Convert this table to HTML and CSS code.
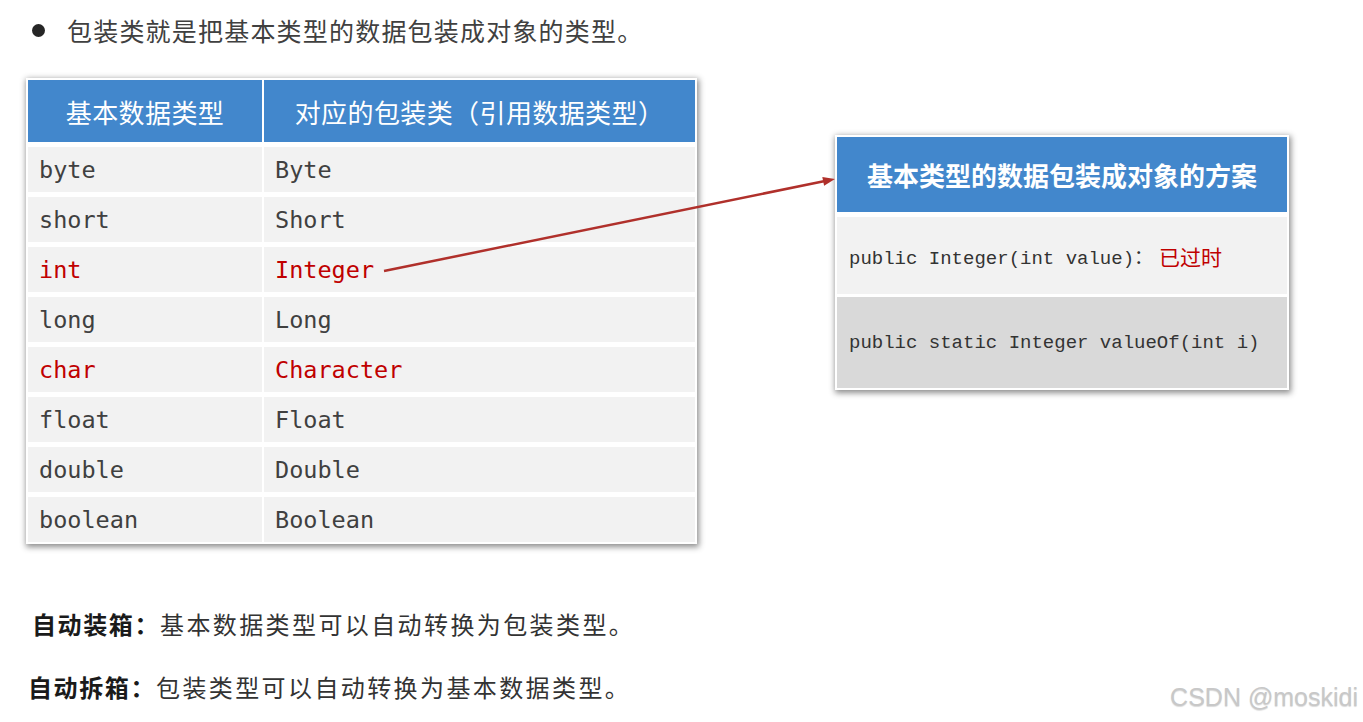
FILE: index.html
```html
<!DOCTYPE html>
<html lang="zh-CN">
<head>
  <meta charset="UTF-8">
  <title>包装类</title>
  <meta name="viewport" content="width=device-width, initial-scale=1.0">
  <link rel="stylesheet" href="styles.css">
</head>
<body>
  <div class="page">
    <p class="lead"><span class="dot"></span>包装类就是把基本类型的数据包装成对象的类型。</p>

    <div class="row">
      <div class="types">
        <div class="th">基本数据类型</div>
        <div class="th">对应的包装类（引用数据类型）</div>
        <div class="td">byte</div><div class="td">Byte</div>
        <div class="td">short</div><div class="td">Short</div>
        <div class="td red">int</div><div class="td red">Integer</div>
        <div class="td">long</div><div class="td">Long</div>
        <div class="td red">char</div><div class="td red">Character</div>
        <div class="td">float</div><div class="td">Float</div>
        <div class="td">double</div><div class="td">Double</div>
        <div class="td">boolean</div><div class="td">Boolean</div>
      </div>

      <div class="scheme">
        <div class="scheme-head">基本类型的数据包装成对象的方案</div>
        <div class="scheme-row first">public Integer(int value)：<span class="old">已过时</span></div>
        <div class="scheme-row second">public static Integer valueOf(int i)</div>
      </div>
    </div>

    <p class="note note-one"><b>自动装箱：</b><span>基本数据类型可以自动转换为包装类型。</span></p>
    <p class="note note-two"><b>自动拆箱：</b><span>包装类型可以自动转换为基本数据类型。</span></p>

    <!-- 箭头：Integer -> 方案 -->
    <svg class="arrow" width="1363" height="722" viewBox="0 0 1363 722">
      <line x1="384" y1="271" x2="825" y2="181" stroke="#b0302b" stroke-width="2.5"/>
      <polygon points="835,179 824.1,185.8 822.3,177" fill="#b0302b"/>
    </svg>

    <div class="mark">CSDN @moskidi</div>
  </div>
</body>
</html>
```

FILE: styles.css
```css
body {
  margin: 0;
  background: #fff;
  font-family: "Noto Sans CJK SC", "Liberation Sans", sans-serif;
}
.page {
  position: relative;
  width: 1363px;
  height: 722px;
  overflow: hidden;
}
.lead {
  margin: 0;
  padding: 12px 0 0 32px;
  display: flex;
  align-items: center;
  height: 36px;
  font-size: 25px;
  letter-spacing: 1.2px;
  color: #404040;
}
.dot {
  width: 13px;
  height: 13px;
  border-radius: 50%;
  background: #262626;
  margin-right: 22px;
}

.row {
  display: flex;
  align-items: flex-start;
  margin-top: 30px;
}

/* 左侧表格 */
.types {
  margin-left: 26px;
  display: grid;
  grid-template-columns: 234px 431px;
  grid-auto-rows: 45px;
  grid-template-rows: 62px;
  column-gap: 2px;
  row-gap: 5px;
  padding: 2px;
  background: #fff;
  box-shadow: 1px 2px 6px 1px rgba(0,0,0,0.45);
}
.th {
  background: #4287cc;
  color: #fff;
  font-size: 26px;
  letter-spacing: 0.4px;
  display: flex;
  align-items: center;
  justify-content: center;
}
.td {
  background: #f2f2f2;
  color: #404040;
  font-family: "DejaVu Sans Mono", "Liberation Mono", monospace;
  font-size: 23.5px;
  display: flex;
  align-items: center;
  padding: 0 11px;
}
.td.red {
  color: #c00000;
}

/* 右侧方案 */
.scheme {
  margin-left: 138px;
  margin-top: 57px;
  width: 450px;
  padding: 2px;
  background: #fff;
  box-shadow: 1px 2px 6px 1px rgba(0,0,0,0.45);
}
.scheme-head {
  height: 75px;
  background: #4287cc;
  color: #fff;
  font-size: 26px;
  font-weight: 700;
  display: flex;
  align-items: center;
  justify-content: center;
}
.scheme-row {
  display: flex;
  align-items: center;
  padding-left: 12px;
  font-family: "Liberation Mono", monospace;
  font-size: 19px;
  color: #333;
}
.scheme-row.first {
  height: 77px;
  margin-top: 5px;
  background: #f2f2f2;
}
.scheme-row.second {
  height: 91px;
  margin-top: 3px;
  background: #d9d9d9;
}
.old {
  color: #c00000;
  font-family: "Noto Sans CJK SC", sans-serif;
  font-size: 21px;
  margin-left: 6px;
}

.note {
  margin: 0;
  height: 36px;
  line-height: 36px;
  font-size: 24px;
  letter-spacing: 1.6px;
  color: #333;
}
.note b {
  color: #1a1a1a;
}
.note span {
  letter-spacing: 2.4px;
}
.note-one {
  margin-top: 62px;
  padding-left: 32px;
}
.note-two {
  margin-top: 27px;
  padding-left: 28px;
}

.arrow {
  position: absolute;
  left: 0;
  top: 0;
  pointer-events: none;
}
.mark {
  position: absolute;
  right: 5px;
  top: 683px;
  font-family: "Liberation Sans", Arial, sans-serif;
  font-size: 25px;
  color: #c8c8c8;
  text-shadow: 0 1px 1px rgba(0,0,0,0.15);
}
```
